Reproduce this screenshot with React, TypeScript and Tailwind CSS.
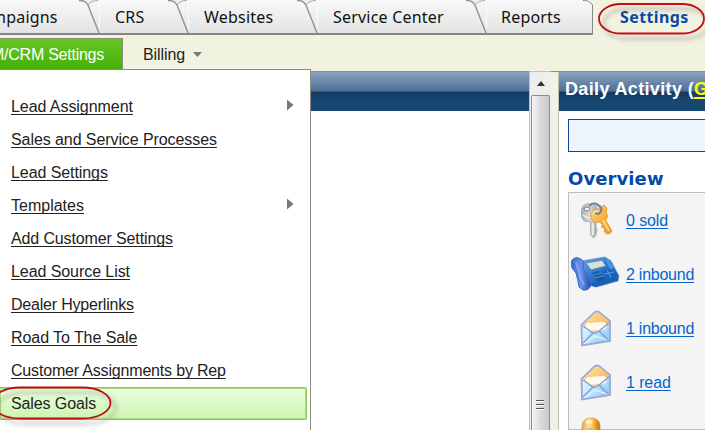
import React from "react";

const menuItems = [
  { label: "Lead Assignment", more: true, spacing: "tracking-[-0.06px]" },
  { label: "Sales and Service Processes", spacing: "tracking-[-0.08px]" },
  { label: "Lead Settings", spacing: "tracking-[-0.08px]" },
  { label: "Templates", more: true, spacing: "tracking-normal" },
  { label: "Add Customer Settings", spacing: "tracking-[-0.13px]" },
  { label: "Lead Source List", spacing: "tracking-[-0.07px]" },
  { label: "Dealer Hyperlinks", spacing: "tracking-[-0.2px]" },
  { label: "Road To The Sale", spacing: "tracking-[-0.07px]" },
  { label: "Customer Assignments by Rep", spacing: "tracking-[-0.18px]" },
];

function Tab({ label, width, pad, last = false }: { label: string; width: string; pad: string; last?: boolean }) {
  return (
    <div className={`relative h-[34px] shrink-0 ${width} ${pad}`}>
      <span className="relative z-10 block whitespace-nowrap pt-[6px] text-[16px] leading-[22px] tracking-[0.2px] text-[#111]">{label}</span>
      {last ? (
        <svg className="absolute right-0 top-0" width="14" height="34" viewBox="0 0 14 34">
          <path d="M7 0H14V5Q11 0.500 7 0Z" fill="#f1f2df" />
          <path d="M4 0.500Q10 0 13.500 5V34" fill="none" stroke="#888" />
        </svg>
      ) : (
        <svg className="absolute right-[-1px] top-0" width="26" height="34" viewBox="0 0 26 34">
          <path d="M8 0H24Q17 1 15 5Q12 1 8 0Z" fill="#f1f2df" />
          <path d="M5 0.500Q11 0 14 5L25 33" fill="none" stroke="#959595" strokeWidth="1.500" />
          <path d="M14 5Q17 0.500 24 0.500" fill="none" stroke="#aaa" />
          <path d="M25.500 3V29" stroke="#fff" strokeOpacity=".8" />
        </svg>
      )}
    </div>
  );
}

function Keys() {
  return (
    <svg width="36" height="38" viewBox="0 0 36 38">
      <defs>
        <linearGradient id="gold" x2="1" y2="1"><stop stopColor="#ffd880" /><stop offset=".5" stopColor="#fbb03a" /><stop offset="1" stopColor="#ee9a1c" /></linearGradient>
        <linearGradient id="silver" x2="1"><stop stopColor="#a9abb0" /><stop offset=".5" stopColor="#dcdcde" /><stop offset="1" stopColor="#9d9d9f" /></linearGradient>
      </defs>
      <path d="M2.500 8L5 4L9 2.500L16 4L19 9L18 18L17 21V26L18 28L17 34L14.500 37L11.500 34V21L5 20L2.500 16Z" fill="url(#silver)" stroke="#a3a4a8" strokeWidth=".8" />
      <path d="M14 22V34" stroke="#f5f5f5" strokeWidth="1.500" />
      <ellipse cx="8" cy="8" rx="3" ry="2" fill="#f4f4f4" stroke="#747985" />
      <path d="M4 14Q8 18 13 16" fill="none" stroke="#eee" strokeWidth="1.500" />
      <path d="M11.500 12L16 8L20 8L25 4L28 7L27 12L29 15L26.500 19L33 30L31 32.500L27.500 33L25 30L26 28L22.500 26L23.500 23L20 21L15 21L12 17Z" fill="url(#gold)" stroke="#e09a3a" strokeWidth=".9" />
      <path d="M24 19L30 30" stroke="#ffe29a" strokeWidth="1.500" />
      <ellipse cx="17" cy="12" rx="2.800" ry="2.200" fill="#eee6da" />
      <path d="M10 5Q14 1 19 4Q24 7 21.500 11Q20 14 16 12" fill="none" stroke="#77809a" strokeWidth="2.200" />
      <path d="M13 4Q17 3 20 7" fill="none" stroke="#c9cfdd" strokeWidth=".8" />
    </svg>
  );
}

function Phone() {
  return (
    <svg width="49" height="36" viewBox="0 0 49 36">
      <defs>
        <linearGradient id="phone" x2="1" y2="1"><stop stopColor="#63aef0" /><stop offset=".5" stopColor="#2870ca" /><stop offset="1" stopColor="#174b9e" /></linearGradient>
        <linearGradient id="handset"><stop stopColor="#3564cd" /><stop offset=".5" stopColor="#6c92ec" /><stop offset="1" stopColor="#2249ad" /></linearGradient>
      </defs>
      <path d="M11 5L34 1L40 5L48 20L47 25L25 31L17 29Z" fill="url(#phone)" stroke="#679bda" />
      <path d="M17 28L47 20V24L25 31Z" fill="#1c60b6" />
      <path d="M15 7L31 4L35 10L20 14Z" fill="#d4e3d5" stroke="#5784a7" />
      <path d="M34 3L38 4L43 12L39 13Z" fill="#4797e4" />
      <path d="M21 17L28 15L34 24L26 26Z" fill="#155a9f" />
      <path d="M22 19L30 17M23 22L32 20" stroke="#4c90d2" />
      <path d="M31 15L41 13L45 20L35 23Z" fill="#1767b8" />
      <path d="M36 14L40 22M33 18L43 16" stroke="#4aa1e9" />
      <path d="M2 3Q5 0 10 3L13 7L12 12L18 23L20 29Q18 35 12 34L8 31L7 25L5 17L1 12L0 6Z" fill="url(#handset)" stroke="#3b66c9" />
      <path d="M5 6L10 23L13 29" fill="none" stroke="#84a5ef" strokeWidth="2" />
    </svg>
  );
}

function Envelope() {
  return (
    <svg width="32" height="37" viewBox="0 0 32 37">
      <defs>
        <linearGradient id="mail" x2="1" y2="1"><stop stopColor="#edfdff" /><stop offset=".5" stopColor="#c3edfc" /><stop offset="1" stopColor="#79c4f2" /></linearGradient>
        <linearGradient id="flap" x2="1" y2="1"><stop stopColor="#ffe3a0" /><stop offset="1" stopColor="#f2b04e" /></linearGradient>
      </defs>
      <path d="M1.500 15L15 2Q17 1 19 2L30 11V31L2 35.500Z" fill="url(#mail)" stroke="#a3a4d8" strokeWidth="1.800" />
      <path d="M3 16L6 12L15 3H19L29 11V13L20 21L12 22Z" fill="url(#flap)" />
      <rect x="5.500" y="12.500" width="21" height="8" rx="3.500" fill="#fffaf0" transform="rotate(-5 16 16)" />
      <path d="M3 16L13 23Q16 24 19 21L29 13M3 33L13 23M19 21L28 30" fill="none" stroke="#9499cf" strokeWidth="1.500" />
      <path d="M4 34L15 26L27 30" fill="none" stroke="#ebffff" />
    </svg>
  );
}

function Gold() {
  return (
    <svg width="24" height="15" viewBox="0 0 24 15">
      <defs><linearGradient id="knob"><stop stopColor="#e3a650" /><stop offset=".4" stopColor="#ffe19a" /><stop offset=".7" stopColor="#f3ae35" /><stop offset="1" stopColor="#b97009" /></linearGradient></defs>
      <path d="M1 15V9Q2 1 10 1Q18 1 19 8V15H14L9 11L4 15Z" fill="url(#knob)" stroke="#d49a40" strokeWidth=".8" />
      <ellipse cx="8" cy="5" rx="3.500" ry="2" fill="#fff0ba" />
    </svg>
  );
}

function Activity({ icon, label, spacing, iconPad = "" }: { icon: React.ReactNode; label: string; spacing: string; iconPad?: string }) {
  return (
    <div className="flex h-[54px] shrink-0 items-center">
      <div className={`flex w-[57px] shrink-0 ${iconPad}`}>{icon}</div>
      <span className={`whitespace-nowrap pt-[2px] text-[16px] leading-[18px] text-[#0565ce] underline decoration-1 underline-offset-[2px] [text-decoration-skip-ink:none] ${spacing}`}>{label}</span>
    </div>
  );
}

export default function App() {
  return (
    <div className="relative flex h-[430px] w-[705px] flex-col overflow-hidden bg-white font-['Liberation_Sans',Arial,sans-serif]">
      <header className="flex h-[35px] shrink-0 bg-[#f1f2df] font-['Noto_Sans',sans-serif]">
        <div className="flex h-[35px] w-[593px] shrink-0 border-b-2 border-[#858585] bg-gradient-to-b from-[#f8f8f8] to-[#e4e4e4]">
          <Tab label="mpaigns" width="w-[99px]" pad="-indent-[9px]" />
          <Tab label="CRS" width="w-[89px]" pad="pl-[16px]" />
          <Tab label="Websites" width="w-[129px]" pad="pl-[16px]" />
          <Tab label="Service Center" width="w-[169px]" pad="pl-[16px]" />
          <Tab label="Reports" width="w-[107px]" pad="pl-[15px]" last />
        </div>
        <span className="pl-[27px] pt-[6px] text-[16px] font-bold leading-[22px] tracking-[0.4px] text-[#0649a8]">Settings</span>
      </header>
      <nav className="flex h-[36px] shrink-0 bg-[#f1f2df] pt-[3px]">
        <div className="flex h-[32px] w-[123px] shrink-0 items-center justify-end overflow-hidden border-r border-t border-[#8b8d7b] bg-gradient-to-b from-[#66c724] to-[#42b000] pr-[18px] text-[16px] tracking-[-0.25px] text-white"><span className="shrink-0 whitespace-nowrap">M/CRM Settings</span></div>
        <div className="flex h-[32px] items-center gap-[8px] pl-[20px] pt-px text-[16px] tracking-[-0.1px] text-[#222]">Billing <svg width="10" height="6"><path d="M0 0H9L4.500 5Z" fill="#777" /></svg></div>
      </nav>
      <main className="flex h-[359px] shrink-0">
        <section className="w-[529px] shrink-0 border-t border-[#8c8e7d]">
          <div className="h-[39px] bg-[linear-gradient(#8aa3c2_0,#507098_48%,#143a61_52%,#164672_75%,#164672_100%)]" />
        </section>
        <div className="flex w-[22px] shrink-0 flex-col border-l border-t border-[#c0c0bc] bg-[#eee]">
          <div className="flex h-[23px] shrink-0 items-center justify-center"><svg width="10" height="7"><path d="M1 6L5 1L9 6Z" fill="#333" /></svg></div>
          <div className="ml-px flex w-[19px] flex-1 justify-center rounded-t-[2px] border-x border-t border-[#8c8c91] bg-gradient-to-r from-[#f6f6f6] via-[#dadade] to-[#c8c9ce] pt-[303px]">
            <svg className="-ml-[2px]" width="10" height="13"><path d="M1 1.500H9M1 5.500H9M1 9.500H9" stroke="#555" /><path d="M1 2.500H9M1 6.500H9M1 10.500H9" stroke="#fff" /></svg>
          </div>
        </div>
        <div className="w-[8px] shrink-0 border-r border-t border-r-[#bfc0ba] border-t-[#8c8e7d] bg-[#f1f2df]" />
        <section className="flex w-[146px] shrink-0 flex-col overflow-hidden border-t border-[#8c8e7d]">
          <h2 className="h-[39px] shrink-0 whitespace-nowrap bg-[linear-gradient(#8aa3c2_0,#507098_48%,#143a61_52%,#164672_75%,#164672_100%)] pl-[6px] pt-[6px] text-[18px] font-bold leading-[22px] tracking-[0.35px] text-white">Daily Activity (<span className="text-[#ff0] underline decoration-2 underline-offset-2 [text-decoration-skip-ink:none]">G</span></h2>
          <div className="ml-[9px] mt-[8px] h-[33px] w-[150px] shrink-0 border border-[#11488e] bg-[#eef5ff]" />
          <h3 className="ml-[9px] mt-[16px] h-[24px] shrink-0 font-['DejaVu_Sans',sans-serif] text-[18px] font-bold leading-[22px] tracking-[0.1px] text-[#0649a8]">Overview</h3>
          <div className="ml-[9px] flex h-[238px] w-[150px] shrink-0 flex-col border border-[#bdbdbd] bg-[#f4f4f4]">
            <Activity icon={<Keys />} label="0 sold" spacing="tracking-[-0.1px]" iconPad="pl-[10px]" />
            <Activity icon={<Phone />} label="2 inbound" spacing="tracking-[-0.25px]" iconPad="pl-[2px]" />
            <Activity icon={<Envelope />} label="1 inbound" spacing="tracking-[-0.25px]" iconPad="pl-[11px]" />
            <Activity icon={<Envelope />} label="1 read" spacing="tracking-[-0.1px]" iconPad="pl-[11px]" />
            <div className="pl-[12px] pt-[8px]"><Gold /></div>
          </div>
        </section>
      </main>
      <aside className="absolute left-0 top-[69px] flex h-[361px] w-[311px] flex-col border-r border-t border-[#8c8e7d] bg-white pt-[20px] text-[16px] text-[#222]">
        {menuItems.map((item) => (
          <div key={item.label} className="flex h-[33px] shrink-0 items-center justify-between pl-[11px] pr-[16px]">
            <span className={`whitespace-nowrap leading-[18px] underline decoration-1 underline-offset-[2px] [text-decoration-skip-ink:none] ${item.spacing}`}>{item.label}</span>
            {item.more && <svg className="-mt-[3px]" width="7" height="12"><path d="M0 0.500L6.500 6L0 11.500Z" fill="#777" /></svg>}
          </div>
        ))}
        <div className="flex h-[33px] w-[307px] shrink-0 items-center rounded-r-[2px] border border-l-0 border-[#8dc75c] bg-gradient-to-b from-[#ebffdd] to-[#cdf4b1] pl-[11px] tracking-[-0.1px] shadow-[inset_0_0_0_1px_#aada83]"><span>Sales Goals</span></div>
      </aside>
      <svg className="pointer-events-none absolute left-0 top-0" width="705" height="430">
        <defs><filter id="ringShadow" x="-20%" y="-30%" width="140%" height="180%"><feDropShadow dx="5" dy="5" stdDeviation="2" floodColor="#555" floodOpacity=".45" /></filter></defs>
        <rect x="599" y="4" width="105" height="29.500" rx="22" ry="14.750" fill="none" stroke="#c10c12" strokeWidth="1.800" filter="url(#ringShadow)" />
        <rect x="-8" y="387.500" width="118.500" height="31" rx="28" ry="15.500" fill="none" stroke="#c10c12" strokeWidth="1.800" filter="url(#ringShadow)" />
      </svg>
    </div>
  );
}
